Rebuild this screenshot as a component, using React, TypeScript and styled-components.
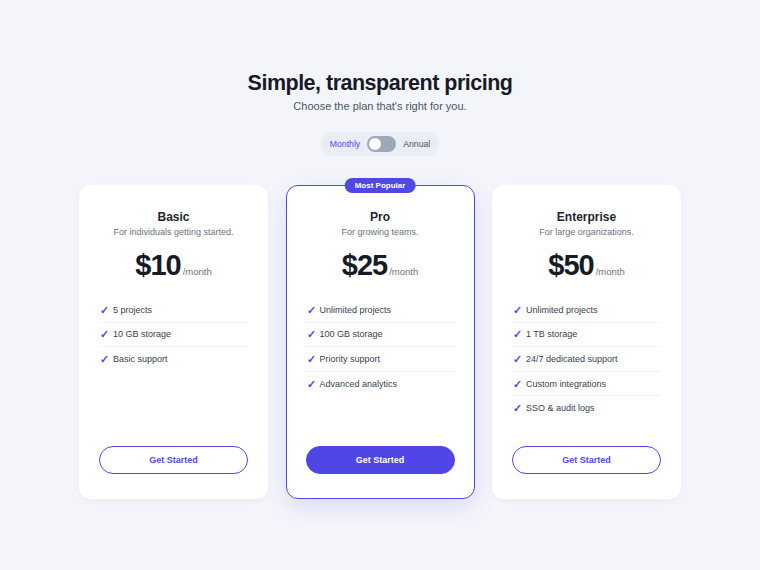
import styled, { createGlobalStyle } from "styled-components";

const GlobalStyle = createGlobalStyle`
  html, body {
    margin: 0;
    padding: 0;
    background: #f4f5fa;
    font-family: "Liberation Sans", Arial, sans-serif;
  }
`;

type Plan = {
  name: string;
  blurb: string;
  price: string;
  features: string[];
  popular?: boolean;
};

const plans: Plan[] = [
  {
    name: "Basic",
    blurb: "For individuals getting started.",
    price: "$10",
    features: ["5 projects", "10 GB storage", "Basic support"],
  },
  {
    name: "Pro",
    blurb: "For growing teams.",
    price: "$25",
    features: ["Unlimited projects", "100 GB storage", "Priority support", "Advanced analytics"],
    popular: true,
  },
  {
    name: "Enterprise",
    blurb: "For large organizations.",
    price: "$50",
    features: [
      "Unlimited projects",
      "1 TB storage",
      "24/7 dedicated support",
      "Custom integrations",
      "SSO & audit logs",
    ],
  },
];

function App(): JSX.Element {
  return (
    <Page>
      <GlobalStyle />
      <Header>
        <Title>Simple, transparent pricing</Title>
        <Subtitle>Choose the plan that's right for you.</Subtitle>
      </Header>
      <Toggle>
        <ToggleLabel $active>Monthly</ToggleLabel>
        <Switch>
          <Knob />
        </Switch>
        <ToggleLabel>Annual</ToggleLabel>
      </Toggle>
      <Cards>
        {plans.map((plan) => (
          <Card key={plan.name} $popular={plan.popular}>
            {plan.popular && <Badge>Most Popular</Badge>}
            <PlanName>{plan.name}</PlanName>
            <PlanBlurb>{plan.blurb}</PlanBlurb>
            <PriceRow>
              <Price>{plan.price}</Price>
              <Per>/month</Per>
            </PriceRow>
            <Features>
              {plan.features.map((f) => (
                <Feature key={f}>
                  <Check>✓</Check>
                  {f}
                </Feature>
              ))}
            </Features>
            <CtaButton $filled={plan.popular}>Get Started</CtaButton>
          </Card>
        ))}
      </Cards>
    </Page>
  );
}

export default App;

const Page = styled.div`
  width: 760px;
  height: 570px;
  display: flex;
  flex-direction: column;
  align-items: center;
  padding-top: 70px;
  box-sizing: border-box;
`;

const Header = styled.div`
  text-align: center;
`;

const Title = styled.h1`
  margin: 0;
  font-size: 21.5px;
  font-weight: 700;
  letter-spacing: -0.5px;
  color: #161b26;
  line-height: 26px;
`;

const Subtitle = styled.p`
  margin: 3px 0 0;
  font-size: 11px;
  color: #4b5563;
  line-height: 14px;
`;

const Toggle = styled.div`
  margin-top: 19px;
  display: flex;
  align-items: center;
  gap: 7px;
  height: 24px;
  padding: 0 9px;
  border-radius: 12px;
  background: #ebedf4;
`;

const ToggleLabel = styled.span<{ $active?: boolean }>`
  font-size: 8.7px;
  color: ${(p) => (p.$active ? "#4f46e5" : "#4b5563")};
`;

const Switch = styled.div`
  width: 29px;
  height: 16px;
  border-radius: 8px;
  background: #9ca8b8;
  display: flex;
  align-items: center;
  padding: 0 2px;
  box-sizing: border-box;
`;

const Knob = styled.div`
  width: 12px;
  height: 12px;
  border-radius: 50%;
  background: #ffffff;
`;

const Cards = styled.div`
  margin-top: 29px;
  display: grid;
  grid-template-columns: repeat(3, 189px);
  gap: 17.5px;
`;

const Card = styled.div<{ $popular?: boolean }>`
  position: relative;
  height: 314px;
  box-sizing: border-box;
  padding: 23px 19px 24px;
  border-radius: 12px;
  background: #ffffff;
  border: ${(p) => (p.$popular ? "1.5px solid #5048e0" : "1.5px solid transparent")};
  box-shadow: ${(p) =>
    p.$popular
      ? "0 8px 22px rgba(79, 70, 229, 0.14)"
      : "0 2px 8px rgba(17, 24, 39, 0.04)"};
  display: flex;
  flex-direction: column;
  align-items: center;
`;

const Badge = styled.div`
  position: absolute;
  top: -8px;
  left: 50%;
  transform: translateX(-50%);
  background: #5048e5;
  color: #ffffff;
  font-size: 8px;
  font-weight: 700;
  padding: 3px 10px;
  border-radius: 8px;
  white-space: nowrap;
`;

const PlanName = styled.div`
  font-size: 12px;
  font-weight: 700;
  color: #1f2430;
  line-height: 16px;
`;

const PlanBlurb = styled.div`
  margin-top: 1px;
  font-size: 9px;
  color: #6b7280;
  line-height: 12px;
`;

const PriceRow = styled.div`
  margin-top: 10px;
  display: flex;
  align-items: baseline;
  gap: 2px;
`;

const Price = styled.span`
  font-size: 29px;
  font-weight: 700;
  color: #161b26;
  letter-spacing: -1px;
  line-height: 34px;
`;

const Per = styled.span`
  font-size: 9.5px;
  color: #6b7280;
`;

const Features = styled.ul`
  list-style: none;
  margin: 16px 0 0;
  padding: 0;
  width: 100%;
  flex: 1;
`;

const Feature = styled.li`
  display: flex;
  align-items: center;
  height: 23.6px;
  font-size: 9px;
  color: #374151;
  border-bottom: 1px solid #f1f2f5;

  &:last-child {
    border-bottom: none;
  }
`;

const Check = styled.span`
  width: 13px;
  margin-left: 1px;
  color: #4f46e5;
  font-size: 10.5px;
  font-weight: 700;
`;

const CtaButton = styled.button<{ $filled?: boolean }>`
  width: 100%;
  height: 28px;
  border-radius: 14px;
  border: 1.5px solid #4f46e5;
  background: ${(p) => (p.$filled ? "#4f46e5" : "#ffffff")};
  color: ${(p) => (p.$filled ? "#ffffff" : "#4f46e5")};
  font-family: "Liberation Sans", Arial, sans-serif;
  font-size: 9px;
  font-weight: 700;
  cursor: pointer;
`;
